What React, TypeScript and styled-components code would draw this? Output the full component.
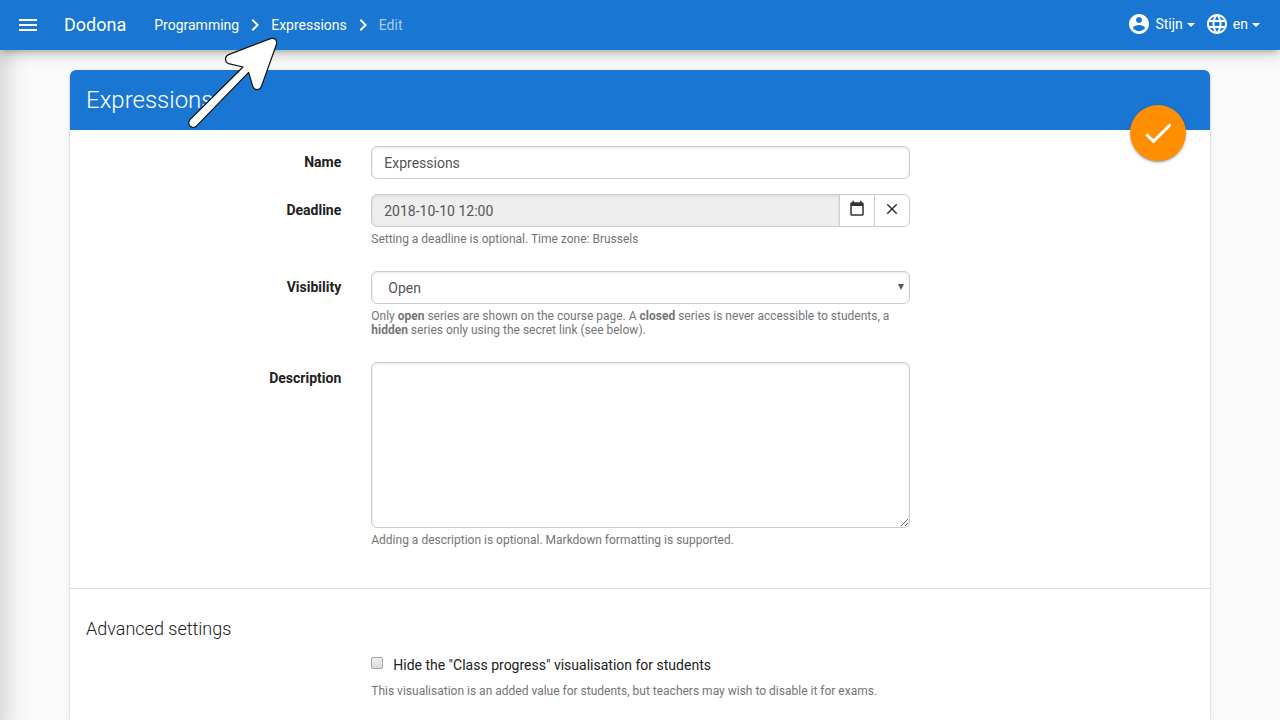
import React from 'react';
import styled, { createGlobalStyle } from 'styled-components';

const GlobalStyle = createGlobalStyle`
  *, *::before, *::after { box-sizing: border-box; }
  body {
    margin: 0;
    background: #fafafa;
    color: #212121;
    font: 400 14px/20px Roboto, "Liberation Sans", sans-serif;
  }
  input, select, textarea, button { font: inherit; }
`;

const Page = styled.div`
  display: flex;
  flex-direction: column;
  min-height: 100vh;
  position: relative;
  overflow: hidden;
`;

const ClosedDrawer = styled.aside`
  position: absolute;
  top: 0;
  bottom: 0;
  right: 100%;
  width: 280px;
  box-shadow: 0 16px 24px 2px rgba(0, 0, 0, 0.14), 0 6px 30px 5px rgba(0, 0, 0, 0.08);
`;

const TopBar = styled.header`
  display: flex;
  align-items: center;
  height: 50px;
  padding: 0 20px 0 16px;
  position: relative;
  background: #1976d2;
  color: #fff;
  box-shadow: 0 5px 5px -3px rgba(0, 0, 0, 0.2), 0 8px 10px 1px rgba(0, 0, 0, 0.03),
    0 3px 14px 2px rgba(0, 0, 0, 0.12);
`;

const MenuButton = styled.button`
  display: flex;
  padding: 0;
  border: 0;
  background: none;
  color: inherit;
`;

const Brand = styled.a`
  margin: 0 28px 0 24px;
  color: inherit;
  font-size: 18px;
  text-decoration: none;
`;

const Breadcrumbs = styled.nav`
  display: flex;
  align-items: center;
  gap: 4px;
  flex: 1;
`;

const Crumb = styled.a`
  color: inherit;
  text-decoration: none;
`;

const CurrentCrumb = styled.span`
  color: rgba(255, 255, 255, 0.65);
`;

const UserMenus = styled.div`
  display: flex;
  gap: 10px;
  padding-bottom: 2px;
`;

const MenuToggle = styled.button`
  display: flex;
  align-items: center;
  gap: 4px;
  padding: 0;
  border: 0;
  background: none;
  color: inherit;
`;

const Caret = styled.span`
  border-top: 4px solid;
  border-right: 4px solid transparent;
  border-left: 4px solid transparent;
  margin-top: 2px;
`;

const Container = styled.main`
  display: flex;
  flex: 1;
  width: 100%;
  max-width: 1170px;
  margin: 0 auto;
  padding: 20px 15px 0;
`;

const Card = styled.section`
  flex: 1;
  min-width: 0;
  position: relative;
  border-radius: 6px 6px 0 0;
  background: #fff;
  box-shadow: 0 2px 2px 0 rgba(0, 0, 0, 0.14), 0 3px 1px -2px rgba(0, 0, 0, 0.2),
    0 1px 5px 0 rgba(0, 0, 0, 0.12);
`;

const CardTitle = styled.div`
  padding: 14px 16px;
  border-radius: 6px 6px 0 0;
  background: #1976d2;
  color: #fff;

  h1 {
    margin: 0;
    font-size: 24px;
    font-weight: 300;
    line-height: 32px;
  }
`;

const SaveButton = styled.button`
  display: flex;
  align-items: center;
  justify-content: center;
  position: absolute;
  top: 35px;
  right: 24px;
  width: 56px;
  height: 56px;
  padding: 0;
  border: 0;
  border-radius: 50%;
  background: #ff8f00;
  color: #fff;
  box-shadow: 0 2px 2px 0 rgba(0, 0, 0, 0.14), 0 3px 1px -2px rgba(0, 0, 0, 0.2),
    0 1px 5px 0 rgba(0, 0, 0, 0.12);
`;

const Form = styled.form`
  display: flex;
  flex-direction: column;
`;

const Fields = styled.div`
  display: flex;
  flex-direction: column;
  gap: 25px;
  padding: 16px 1px 41px 2px;
`;

const FieldPair = styled.div`
  display: flex;
  flex-direction: column;
  gap: 15px;
`;

const FormRow = styled.div`
  display: grid;
  grid-template-columns: 25% 50%;
`;

const FieldLabel = styled.label`
  padding: 6px 15px 0;
  font-weight: 700;
  text-align: right;
`;

const FieldBody = styled.div<{ $offset?: boolean }>`
  grid-column: ${(p) => (p.$offset ? 2 : 'auto')};
  min-width: 0;
  padding: 0 15px;
`;

const TextInput = styled.input`
  display: block;
  width: 100%;
  min-width: 0;
  height: 33px;
  padding: 6px 12px;
  border: 1px solid #ccc;
  border-radius: 6px;
  outline: 0;
  background: #fff;
  color: #555;
  box-shadow: inset 0 1px 3px rgba(0, 0, 0, 0.1);

  &:read-only {
    background: #eee;
  }
`;

const InputGroup = styled.div`
  display: flex;

  ${TextInput} {
    flex: 1;
    border-radius: 6px 0 0 6px;
  }
`;

const AddonButton = styled.button`
  display: flex;
  justify-content: center;
  width: 36px;
  height: 33px;
  margin-left: -1px;
  padding: 5px 0 0;
  border: 1px solid #ccc;
  background: #fff;
  color: #333;

  &:last-child {
    border-radius: 0 6px 6px 0;
  }
`;

const SelectWrap = styled.div`
  position: relative;

  svg {
    position: absolute;
    top: 13px;
    right: 6px;
    pointer-events: none;
  }
`;

const Select = styled.select`
  display: block;
  appearance: none;
  width: 100%;
  height: 33px;
  padding: 0 16px;
  border: 1px solid #ccc;
  border-radius: 6px;
  background: #fff;
  color: #555;
  box-shadow: inset 0 1px 3px rgba(0, 0, 0, 0.1);
`;

const TextArea = styled.textarea`
  display: block;
  width: 100%;
  height: 166px;
  padding: 6px 12px;
  border: 1px solid #ccc;
  border-radius: 6px;
  outline: 0;
  color: #555;
  box-shadow: inset 0 1px 3px rgba(0, 0, 0, 0.1);
  resize: vertical;
`;

const Help = styled.p`
  margin: 5px 0 0;
  color: #757575;
  font-size: 12px;
  line-height: 14px;
`;

const Advanced = styled.section`
  padding: 30px 1px 22px 2px;
  border-top: 1px solid #ddd;
`;

const SectionTitle = styled.h2`
  margin: 0 14px 16px;
  font-size: 18px;
  font-weight: 300;
  line-height: 20px;
`;

const CheckLabel = styled.label`
  display: flex;
  gap: 10px;
  margin-bottom: 9px;
`;

const CheckBox = styled.input`
  appearance: none;
  width: 12px;
  height: 12px;
  margin: 2px 0 0;
  border: 1px solid #a6a6a6;
  border-radius: 2px;
  background: linear-gradient(#ededed, #dcdcdc);
`;

const Pointer = styled.svg`
  position: absolute;
  top: 30px;
  left: 180px;
  pointer-events: none;
`;

type IconProps = { d: string; size?: number };

const Icon = ({ d, size = 24 }: IconProps) => (
  <svg width={size} height={size} viewBox="0 0 24 24" fill="currentColor" aria-hidden="true">
    <path d={d} />
  </svg>
);

const icons = {
  menu: 'M3 6h18v2H3V6m0 5h18v2H3v-2m0 5h18v2H3v-2z',
  chevron: 'M8.59 16.58L13.17 12 8.59 7.41 10 6l6 6-6 6-1.41-1.42z',
  account:
    'M12 2C6.48 2 2 6.48 2 12s4.48 10 10 10 10-4.48 10-10S17.52 2 12 2zm0 3c1.66 0 3 1.34 3 3s-1.34 3-3 3-3-1.34-3-3 1.34-3 3-3zm0 14.2c-2.5 0-4.71-1.28-6-3.22.03-1.99 4-3.08 6-3.08 1.99 0 5.97 1.09 6 3.08-1.29 1.94-3.5 3.22-6 3.22z',
  globe:
    'M11.99 2C6.47 2 2 6.48 2 12s4.47 10 9.99 10C17.52 22 22 17.52 22 12S17.52 2 11.99 2zm6.93 6h-2.95c-.32-1.25-.78-2.45-1.38-3.56 1.84.63 3.37 1.91 4.33 3.56zM12 4.04c.83 1.2 1.48 2.53 1.91 3.96h-3.82c.43-1.43 1.08-2.76 1.91-3.96zM4.26 14C4.1 13.36 4 12.69 4 12s.1-1.36.26-2h3.38c-.08.66-.14 1.32-.14 2 0 .68.06 1.34.14 2H4.26zm.82 2h2.95c.32 1.25.78 2.45 1.38 3.56-1.84-.63-3.37-1.9-4.33-3.56zm2.95-8H5.08c.96-1.66 2.49-2.93 4.33-3.56C8.81 5.55 8.35 6.75 8.03 8zM12 19.96c-.83-1.2-1.48-2.53-1.91-3.96h3.82c-.43 1.43-1.08 2.76-1.91 3.96zM14.34 14H9.66c-.09-.66-.16-1.32-.16-2 0-.68.07-1.35.16-2h4.68c.09.65.16 1.32.16 2 0 .68-.07 1.34-.16 2zm.25 5.56c.6-1.11 1.06-2.31 1.38-3.56h2.95c-.96 1.65-2.49 2.93-4.33 3.56zM16.36 14c.08-.66.14-1.32.14-2 0-.68-.06-1.34-.14-2h3.38c.16.64.26 1.31.26 2s-.1 1.36-.26 2h-3.38z',
  check: 'M21 7L9 19l-5.5-5.5 1.41-1.41L9 16.17 19.59 5.59 21 7z',
  calendar:
    'M19 19H5V8h14m-3-7v2H8V1H6v2H5c-1.11 0-2 .89-2 2v14a2 2 0 0 0 2 2h14a2 2 0 0 0 2-2V5a2 2 0 0 0-2-2h-1V1',
  close:
    'M19 6.41L17.59 5 12 10.59 6.41 5 5 6.41 10.59 12 5 17.59 6.41 19 12 13.41 17.59 19 19 17.59 13.41 12 19 6.41z',
};

export default function App() {
  return (
    <>
      <GlobalStyle />
      <Page>
        <ClosedDrawer />
        <TopBar>
          <MenuButton type="button" aria-label="Menu">
            <Icon d={icons.menu} />
          </MenuButton>
          <Brand href="#">Dodona</Brand>
          <Breadcrumbs>
            <Crumb href="#">Programming</Crumb>
            <Icon d={icons.chevron} />
            <Crumb href="#">Expressions</Crumb>
            <Icon d={icons.chevron} />
            <CurrentCrumb>Edit</CurrentCrumb>
          </Breadcrumbs>
          <UserMenus>
            <MenuToggle type="button">
              <Icon d={icons.account} />
              Stijn
              <Caret />
            </MenuToggle>
            <MenuToggle type="button">
              <Icon d={icons.globe} />
              en
              <Caret />
            </MenuToggle>
          </UserMenus>
        </TopBar>
        <Container>
          <Card>
            <CardTitle>
              <h1>Expressions</h1>
            </CardTitle>
            <SaveButton type="submit" form="series" aria-label="Save">
              <Icon d={icons.check} size={36} />
            </SaveButton>
            <Form id="series" onSubmit={(e) => e.preventDefault()}>
              <Fields>
                <FieldPair>
                  <FormRow>
                    <FieldLabel htmlFor="name">Name</FieldLabel>
                    <FieldBody>
                      <TextInput id="name" defaultValue="Expressions" />
                    </FieldBody>
                  </FormRow>
                  <FormRow>
                    <FieldLabel htmlFor="deadline">Deadline</FieldLabel>
                    <FieldBody>
                      <InputGroup>
                        <TextInput id="deadline" readOnly value="2018-10-10 12:00" />
                        <AddonButton type="button" aria-label="Pick a date">
                          <Icon d={icons.calendar} size={18} />
                        </AddonButton>
                        <AddonButton type="button" aria-label="Clear deadline">
                          <Icon d={icons.close} size={18} />
                        </AddonButton>
                      </InputGroup>
                      <Help>Setting a deadline is optional. Time zone: Brussels</Help>
                    </FieldBody>
                  </FormRow>
                </FieldPair>
                <FormRow>
                  <FieldLabel htmlFor="visibility">Visibility</FieldLabel>
                  <FieldBody>
                    <SelectWrap>
                      <Select id="visibility" defaultValue="open">
                        <option value="open">Open</option>
                        <option value="hidden">Hidden</option>
                        <option value="closed">Closed</option>
                      </Select>
                      <svg width="6" height="6" viewBox="0 0 6 6" aria-hidden="true">
                        <path d="M0 0h6L3 6z" fill="#555" />
                      </svg>
                    </SelectWrap>
                    <Help>
                      Only <strong>open</strong> series are shown on the course page. A{' '}
                      <strong>closed</strong> series is never accessible to students, a{' '}
                      <strong>hidden</strong> series only using the secret link (see below).
                    </Help>
                  </FieldBody>
                </FormRow>
                <FormRow>
                  <FieldLabel htmlFor="description">Description</FieldLabel>
                  <FieldBody>
                    <TextArea id="description" />
                    <Help>Adding a description is optional. Markdown formatting is supported.</Help>
                  </FieldBody>
                </FormRow>
              </Fields>
              <Advanced>
                <SectionTitle>Advanced settings</SectionTitle>
                <FormRow>
                  <FieldBody $offset>
                    <CheckLabel>
                      <CheckBox type="checkbox" />
                      Hide the "Class progress" visualisation for students
                    </CheckLabel>
                    <Help>
                      This visualisation is an added value for students, but teachers may wish to
                      disable it for exams.
                    </Help>
                  </FieldBody>
                </FormRow>
              </Advanced>
            </Form>
          </Card>
        </Container>
        <Pointer width="110" height="110" viewBox="0 0 110 110" aria-hidden="true">
          <path
            d="M90.500 8.600Q97.200 7.200 96.600 14L81.500 56.200Q80.400 59.600 77 59.600Q73.800 59.600 72.800 56.400L68.600 42.400L16.400 96.200Q13.400 98.600 10.600 96.600Q7.200 93.600 10 89.600L63 37L48.600 33.600Q45.400 32.200 45.500 29Q45.600 26 48.600 24.600Z"
            fill="#fff"
            stroke="#111"
            strokeWidth="1.200"
            strokeLinejoin="round"
          />
        </Pointer>
      </Page>
    </>
  );
}
